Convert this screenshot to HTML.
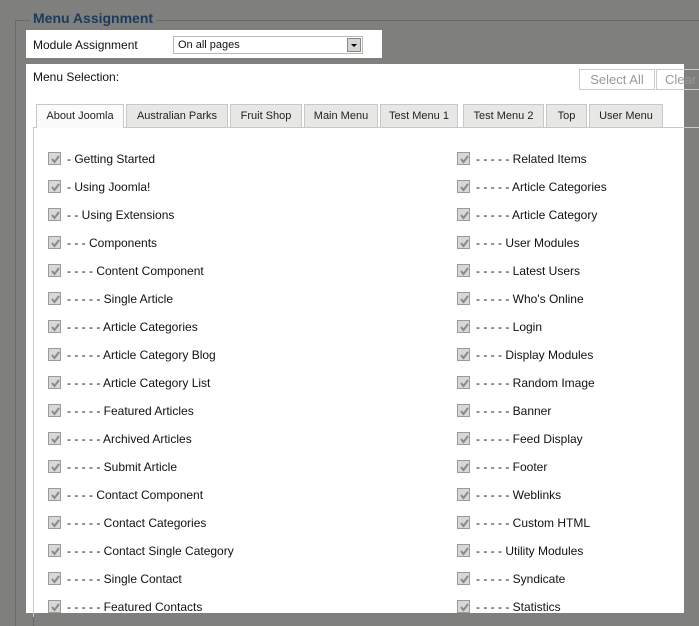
<!DOCTYPE html><html><head><style>
html,body{margin:0;width:699px;height:626px;overflow:hidden}
body{background:#7f807d;position:relative;font-family:Tahoma,"Liberation Sans",sans-serif;font-size:12px;color:#111}
.a{position:absolute}
.cb{position:absolute;width:11px;height:11px;border:1px solid #9a9a9a;background:#d8d8d4}
.cb svg{position:absolute;left:1px;top:1px}
.t{position:absolute;white-space:nowrap;line-height:14px}
.tab{position:absolute;top:104px;height:22px;border:1px solid #c8c8c8;border-bottom:none;background:#e7e8e6;line-height:22px;text-align:center;font-size:11px;color:#222}
</style></head><body>
<div class="a" style="left:15px;top:20px;width:684px;height:606px;border-left:1px solid #6a6a68;border-top:1px solid #6a6a68"></div>
<div class="a" style="left:30px;top:10px;background:#7f807d;padding:0 3px;font-weight:bold;font-size:14px;color:#1c3a5c">Menu Assignment</div>
<div class="a" style="left:26px;top:30px;width:356px;height:28px;background:#fff"></div>
<div class="t" style="left:33px;top:38px">Module Assignment</div>
<div class="a" style="left:173px;top:36px;width:188px;height:16px;border:1px solid #b8b8b8;background:#fff;font-size:11px;line-height:16px;text-indent:4px">On all pages
<div class="a" style="right:1px;top:1px;width:14px;height:14px;background:#d6d5cf;border:1px solid #888;box-sizing:border-box"><div class="a" style="left:3px;top:5px;border:3px solid transparent;border-top:3px solid #000;border-bottom:none"></div></div></div>
<div class="a" style="left:26px;top:64px;width:658px;height:549px;background:#fff"></div>
<div class="a" style="left:33px;top:613px;width:1px;height:20px;background:#6a6a68"></div>
<div class="t" style="left:33px;top:70px">Menu Selection:</div>
<div class="a" style="left:579px;top:69px;width:74px;height:19px;border:1px solid #ccc;color:#999;font-size:13px;line-height:19px;text-align:center">Select All</div>
<div class="a" style="left:656px;top:69px;width:60px;height:19px;border:1px solid #ccc;color:#999;font-size:13px;line-height:19px;text-indent:8px">Clear</div>
<div class="a" style="left:33px;top:127px;width:666px;height:1px;background:#c8c8c8"></div>
<div class="a" style="left:33px;top:127px;width:1px;height:490px;background:#c8c8c8"></div>
<div class="tab" style="left:36px;width:86px;background:#fafbfa;height:23px">About Joomla</div>
<div class="tab" style="left:126px;width:100px">Australian Parks</div>
<div class="tab" style="left:230px;width:70px">Fruit Shop</div>
<div class="tab" style="left:304px;width:72px">Main Menu</div>
<div class="tab" style="left:380px;width:76px">Test Menu 1</div>
<div class="tab" style="left:463px;width:79px">Test Menu 2</div>
<div class="tab" style="left:546px;width:39px">Top</div>
<div class="tab" style="left:589px;width:72px">User Menu</div>
<div id="rows"></div>
<script>
var L=["- Getting Started","- Using Joomla!","- - Using Extensions","- - - Components","- - - - Content Component","- - - - - Single Article","- - - - - Article Categories","- - - - - Article Category Blog","- - - - - Article Category List","- - - - - Featured Articles","- - - - - Archived Articles","- - - - - Submit Article","- - - - Contact Component","- - - - - Contact Categories","- - - - - Contact Single Category","- - - - - Single Contact","- - - - - Featured Contacts"];
var R=["- - - - - Related Items","- - - - - Article Categories","- - - - - Article Category","- - - - User Modules","- - - - - Latest Users","- - - - - Who's Online","- - - - - Login","- - - - Display Modules","- - - - - Random Image","- - - - - Banner","- - - - - Feed Display","- - - - - Footer","- - - - - Weblinks","- - - - - Custom HTML","- - - - Utility Modules","- - - - - Syndicate","- - - - - Statistics"];
var h="",ck='<svg width="11" height="11"><path d="M2 5 L4.5 8 L9 2" stroke="#8a8a8a" stroke-width="2" fill="none"/></svg>';
for(var i=0;i<17;i++){var y=152+i*28;
h+='<div class="cb" style="left:48px;top:'+y+'px">'+ck+'</div><div class="t" style="left:67px;top:'+y+'px">'+L[i]+'</div>';
h+='<div class="cb" style="left:457px;top:'+y+'px">'+ck+'</div><div class="t" style="left:476px;top:'+y+'px">'+R[i]+'</div>';}
document.getElementById("rows").innerHTML=h;
</script>
</body></html>
